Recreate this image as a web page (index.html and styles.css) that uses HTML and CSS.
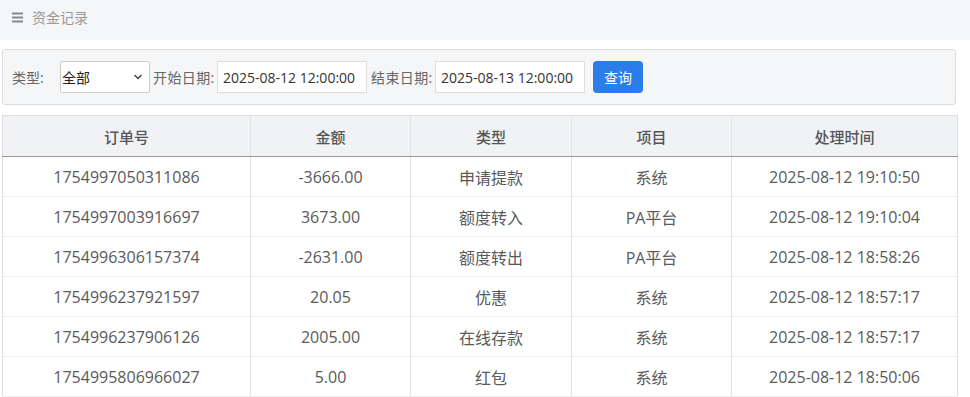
FILE: index.html
```html
<!DOCTYPE html>
<html lang="zh-CN">
<head>
<meta charset="utf-8">
<link rel="stylesheet" href="styles.css">
</head>
<body>
<div class="topbar"><svg class="menu" width="11" height="11" viewBox="0 0 11 11"><path d="M0 1.5H11M0 5.5H11M0 9.5H11" stroke="#888" stroke-width="2"/></svg><span class="title">资金记录</span></div>
<div class="filter">
  <label class="lbl first">类型:</label>
  <div class="select"><span>全部</span><svg width="10" height="6" viewBox="0 0 10 6"><path d="M1.5 1 L5 4.5 L8.5 1" fill="none" stroke="#444" stroke-width="1.4"/></svg></div>
  <label class="lbl date">开始日期:</label>
  <div class="input">2025-08-12 12:00:00</div>
  <label class="lbl date">结束日期:</label>
  <div class="input">2025-08-13 12:00:00</div>
  <button class="btn">查询</button>
</div>
<table class="grid">
  <colgroup><col class="c1"><col class="c2"><col class="c3"><col class="c4"><col class="c5"></colgroup>
  <thead><tr><th>订单号</th><th>金额</th><th>类型</th><th>项目</th><th>处理时间</th></tr></thead>
  <tbody>
    <tr><td>1754997050311086</td><td>-3666.00</td><td>申请提款</td><td>系统</td><td>2025-08-12 19:10:50</td></tr>
    <tr><td>1754997003916697</td><td>3673.00</td><td>额度转入</td><td>PA平台</td><td>2025-08-12 19:10:04</td></tr>
    <tr><td>1754996306157374</td><td>-2631.00</td><td>额度转出</td><td>PA平台</td><td>2025-08-12 18:58:26</td></tr>
    <tr><td>1754996237921597</td><td>20.05</td><td>优惠</td><td>系统</td><td>2025-08-12 18:57:17</td></tr>
    <tr><td>1754996237906126</td><td>2005.00</td><td>在线存款</td><td>系统</td><td>2025-08-12 18:57:17</td></tr>
    <tr><td>1754995806966027</td><td>5.00</td><td>红包</td><td>系统</td><td>2025-08-12 18:50:06</td></tr>
  </tbody>
</table>
</body>
</html>
```

FILE: styles.css
```css
* { box-sizing: border-box; }
body {
  margin: 0;
  background: #fff;
  font-family: "Open Sans", "Noto Sans CJK SC", sans-serif;
  color: #555;
  overflow: hidden;
}
.topbar {
  height: 40px;
  background: #f5f6f8;
  display: flex;
  align-items: center;
  padding: 0 0 6px 12px;
  color: #999;
  font-size: 14px;
}
.menu { margin-right: 9px; flex: none; }
.filter {
  margin: 9px 14px 0 2px;
  height: 56px;
  border: 1px solid #ddd;
  border-radius: 3px;
  background: #f5f6f8;
  display: flex;
  align-items: center;
  padding: 0 0 0 9px;
  font-size: 14px;
}
.lbl { color: #666; white-space: nowrap; flex: none; }
.lbl.first { width: 48px; }
.lbl.date { width: 64px; letter-spacing: 0.4px; }
.select {
  width: 90px;
  height: 32px;
  border: 1px solid #ccc;
  border-radius: 2px;
  background: #fff;
  display: flex;
  align-items: center;
  justify-content: space-between;
  padding: 0 6px 0 1px;
  color: #222;
  margin-right: 3px;
}
.input {
  width: 150px;
  height: 32px;
  border: 1px solid #ddd;
  background: #fff;
  display: flex;
  align-items: center;
  padding-left: 5px;
  color: #333;
  font-size: 14px;
  margin-right: 4px;
}
.btn {
  margin-left: 4px;
  width: 50px;
  height: 32px;
  border: 0;
  border-radius: 4px;
  background: #2b7de9;
  color: #fff;
  font-family: inherit;
  font-size: 14px;
  padding: 0;
}
.grid {
  margin: 10px 0 0 2px;
  width: 955px;
  border-collapse: collapse;
  table-layout: fixed;
  border: 1px solid #ddd;
  border-bottom: 0;
}
.c1 { width: 248px; }
.c2 { width: 160px; }
.c3 { width: 161px; }
.c4 { width: 160px; }
.c5 { width: 226px; }
.grid th {
  height: 41px;
  background: #f0f2f5;
  font-weight: 500;
  font-size: 15px;
  color: #555;
  border-left: 1px solid #e3e3e3;
  border-bottom: 1px solid #999;
}
.grid td {
  height: 40px;
  text-align: center;
  font-size: 16px;
  color: #5a5a5a;
  border-left: 1px solid #eadde0;
  border-bottom: 1px solid #eee;
}
.grid th:first-child, .grid td:first-child { border-left: 0; }
```
